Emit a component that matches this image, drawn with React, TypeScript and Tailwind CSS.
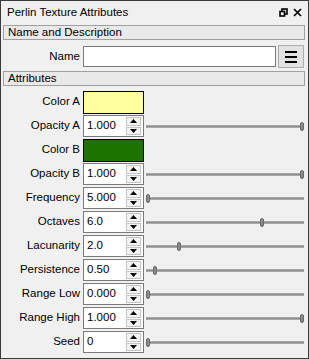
import React from 'react'

const font = { fontFamily: '"Liberation Sans", Arial, sans-serif' }

type Row =
  | { kind: 'color'; label: string; color: string }
  | { kind: 'num'; label: string; value: string; pos: number }

const rows: Row[] = [
  { kind: 'color', label: 'Color A', color: '#ffff9f' },
  { kind: 'num', label: 'Opacity A', value: '1.000', pos: 1 },
  { kind: 'color', label: 'Color B', color: '#1c7300' },
  { kind: 'num', label: 'Opacity B', value: '1.000', pos: 1 },
  { kind: 'num', label: 'Frequency', value: '5.000', pos: 0 },
  { kind: 'num', label: 'Octaves', value: '6.0', pos: 0.74 },
  { kind: 'num', label: 'Lacunarity', value: '2.0', pos: 0.2 },
  { kind: 'num', label: 'Persistence', value: '0.50', pos: 0.045 },
  { kind: 'num', label: 'Range Low', value: '0.000', pos: 0 },
  { kind: 'num', label: 'Range High', value: '1.000', pos: 1 },
  { kind: 'num', label: 'Seed', value: '0', pos: 0 },
]

const GroupHeader = ({ title }: { title: string }) => (
  <div className="h-[15px] mx-[2px] mr-[3px] border border-[#a0a0a0] bg-[#e9e9e9] flex items-center pl-[4px] text-[11.5px] leading-none text-black">
    {title}
  </div>
)

const SpinBox = ({ value }: { value: string }) => (
  <div className="w-[61px] h-[22px] border border-[#7a7a7a] bg-white flex items-center">
    <span className="flex-1 pl-[3px] text-[11.5px] leading-none text-black">{value}</span>
    <div className="w-[15px] h-[18px] mr-[2px] flex flex-col gap-[1px]">
      <div className="flex-1 border border-[#c4c4c4] bg-[#f4f4f4] flex items-center justify-center">
        <svg width="7" height="4" viewBox="0 0 7 4"><path d="M0 4 L3.5 0 L7 4 Z" fill="#000" /></svg>
      </div>
      <div className="flex-1 border border-[#c4c4c4] bg-[#f4f4f4] flex items-center justify-center">
        <svg width="7" height="4" viewBox="0 0 7 4"><path d="M0 0 L7 0 L3.5 4 Z" fill="#000" /></svg>
      </div>
    </div>
  </div>
)

const Slider = ({ pos }: { pos: number }) => (
  <div className="flex-1 h-[22px] ml-[2px] mr-[4px] relative flex items-center">
    <div className="w-full h-[3px] bg-[#8e8e8e] border-y border-[#a8a8a8]" />
    <div
      className="absolute top-[7px] w-[4px] h-[9px] rounded-full bg-[#8a8a8a] border border-[#6a6a6a]"
      style={{ left: `calc(${pos * 100}% - ${pos * 4}px)` }}
    />
  </div>
)

export default function App() {
  return (
    <div className="w-[309px] h-[359px] border border-[#3a3a3a] bg-[#f0f0f0] flex flex-col overflow-hidden" style={font}>
      {/* title bar */}
      <div className="h-[23px] flex items-center justify-between pl-[6px] pr-[6px] text-[11.5px] text-black">
        <span>Perlin Texture Attributes</span>
        <div className="flex items-center gap-[5px]">
          <svg width="9" height="9" viewBox="0 0 9 9">
            <rect x="3" y="1" width="5" height="5" fill="none" stroke="#000" strokeWidth="1.6" />
            <rect x="1" y="3.5" width="4.5" height="4.5" fill="#f0f0f0" stroke="#000" strokeWidth="1.6" />
          </svg>
          <svg width="9" height="9" viewBox="0 0 9 9">
            <path d="M1 1 L8 8 M8 1 L1 8" stroke="#000" strokeWidth="1.7" />
          </svg>
        </div>
      </div>

      <div className="mt-[1px]">
        <GroupHeader title="Name and Description" />
      </div>

      <div className="flex items-center mt-[5px] h-[23px]">
        <span className="w-[82px] text-right pr-[3px] text-[11.5px] text-black">Name</span>
        <div className="w-[193px] h-[21px] border border-[#7a7a7a] bg-white" />
        <button className="ml-[2px] w-[26px] h-[23px] border border-[#adadad] bg-[#e1e1e1] flex flex-col items-center justify-center gap-[3px]">
          <span className="block w-[12px] h-[2px] bg-black" />
          <span className="block w-[12px] h-[2px] bg-black" />
          <span className="block w-[12px] h-[2px] bg-black" />
        </button>
      </div>

      <div className="mt-[3px]">
        <GroupHeader title="Attributes" />
      </div>

      <div className="flex flex-col gap-[2px] mt-[5px]">
        {rows.map((r) => (
          <div key={r.label} className="flex items-center h-[22px]">
            <span className="w-[82px] text-right pr-[3px] text-[11.5px] text-black whitespace-nowrap">{r.label}</span>
            {r.kind === 'color' ? (
              <div className="w-[61px] h-[23px] border border-black" style={{ backgroundColor: r.color }} />
            ) : (
              <>
                <SpinBox value={r.value} />
                <Slider pos={r.pos} />
              </>
            )}
          </div>
        ))}
      </div>
    </div>
  )
}
